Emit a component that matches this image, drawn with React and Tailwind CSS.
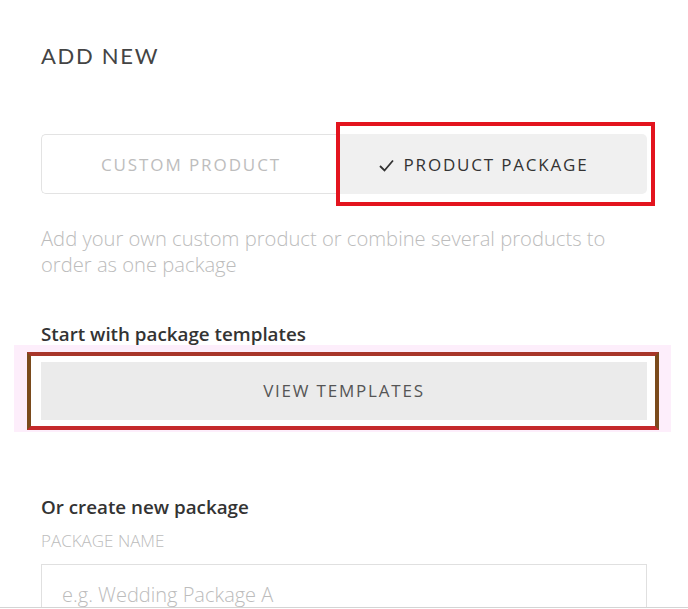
export default function App() {
    return (
        <div className="w-[688px] h-[608px] overflow-hidden border-b border-[#d4d4d4] bg-white font-['Open_Sans',sans-serif]">
            <div className="px-[41px] pt-[41px]">
                {/* Title */}
                <h1 className="font-['Lato',sans-serif] text-[22px] leading-[30px] tracking-[1.7px] text-[#444]">
                    ADD NEW
                </h1>

                {/* Type switch */}
                <div className="relative mt-[63px] flex h-[60px]">
                    <button className="flex w-[299px] items-center justify-center rounded-l-[5px] border border-r-0 border-[#e3e3e3] bg-white pt-[2px] text-[17px] tracking-[1.9px] text-[#bdbdbd]">
                        CUSTOM PRODUCT
                    </button>
                    <button className="flex flex-1 items-center justify-center gap-[10px] rounded-r-[5px] bg-[#f0f0f0] pt-[2px] pr-[20px] text-[17px] tracking-[1.8px] text-[#333]">
                        <svg width="15" height="13" viewBox="0 0 15 13" fill="none">
                            <path d="M1 7l4.5 4.5L14 1.5" stroke="#333" strokeWidth="1.8" />
                        </svg>
                        PRODUCT PACKAGE
                    </button>
                    {/* annotation outline */}
                    <div className="pointer-events-none absolute left-[295px] right-[-8px] top-[-12px] bottom-[-12px] border-4 border-[#e3141e]" />
                </div>

                <p className="mt-[31px] text-[20.2px] font-light leading-[26px] text-[#bcbcbc]">
                    Add your own custom product or combine several products to
                    order as one package
                </p>

                <h2 className="mt-[45px] text-[18.8px] font-semibold leading-[24px] text-[#333]">
                    Start with package templates
                </h2>

                {/* Templates button with highlight */}
                <div className="ml-[-27px] mr-[-24px] mt-[-1px] bg-[#fdeefb] pl-[13px] pr-[12px] pt-[7px] pb-[2px]">
                    <div className="border-4 border-[#7a4a1c] border-t-[#a8352a] border-b-[#c4292b] bg-white pl-[10px] pr-[8px] py-[6px]">
                        <button className="flex h-[58px] w-full items-center justify-center bg-[#ebebeb] text-[17px] tracking-[1.8px] text-[#555]">
                            VIEW TEMPLATES
                        </button>
                    </div>
                </div>

                <h2 className="mt-[63px] text-[18.8px] font-semibold leading-[24px] text-[#333]">
                    Or create new package
                </h2>
                <div className="mt-[11px] text-[17px] font-light leading-[22px] text-[#bcbcbc]">
                    PACKAGE NAME
                </div>
                <input
                    type="text"
                    placeholder="e.g. Wedding Package A"
                    className="mt-[12px] h-[60px] w-full border border-[#e0e0e0] px-[20px] text-[20px] font-light text-[#333] outline-none placeholder:text-[#bcbcbc]"
                />
            </div>
        </div>
    );
}
